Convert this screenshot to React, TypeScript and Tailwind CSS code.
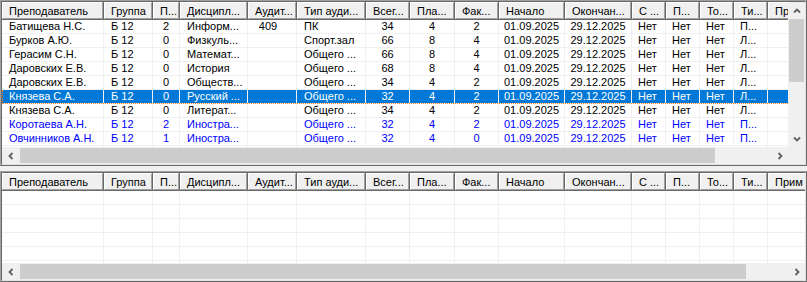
import React from 'react';

type Col = {title: string; w: string; cell: string};

const columns: Col[] = [
    {title: 'Преподаватель', w: 'w-[102px]', cell: 'justify-start pl-[7px]'},
    {title: 'Группа', w: 'w-[49px]', cell: 'justify-start pl-[7px]'},
    {title: 'П...', w: 'w-[27px]', cell: 'justify-center'},
    {title: 'Дисципл...', w: 'w-[68px]', cell: 'justify-start pl-[7px]'},
    {title: 'Аудит...', w: 'w-[49px]', cell: 'justify-center pr-2'},
    {title: 'Тип ауди...', w: 'w-[69px]', cell: 'justify-start pl-[7px]'},
    {title: 'Всег...', w: 'w-[44px]', cell: 'justify-center'},
    {title: 'Пла...', w: 'w-[45px]', cell: 'justify-center'},
    {title: 'Фак...', w: 'w-[44px]', cell: 'justify-center'},
    {title: 'Начало', w: 'w-[66px]', cell: 'justify-center'},
    {title: 'Окончан...', w: 'w-[67px]', cell: 'justify-center'},
    {title: 'С ...', w: 'w-[34px]', cell: 'justify-start pl-[6px]'},
    {title: 'П...', w: 'w-[34px]', cell: 'justify-start pl-[6px]'},
    {title: 'То...', w: 'w-[34px]', cell: 'justify-start pl-[6px]'},
    {title: 'Ти...', w: 'w-[34px]', cell: 'justify-start pl-[6px]'},
    {title: 'Прим', w: 'w-[64px]', cell: 'justify-start pl-[6px]'},
];

type Tone = 'normal' | 'blue' | 'selected';

const tail = ['01.09.2025', '29.12.2025', 'Нет', 'Нет', 'Нет'];

const rows: {cells: string[]; tone: Tone}[] = [
    {cells: ['Батищева Н.С.', 'Б 12', '2', 'Информ...', '409', 'ПК', '34', '4', '2', ...tail, 'П...'], tone: 'normal'},
    {cells: ['Бурков А.Ю.', 'Б 12', '0', 'Физкуль...', '', 'Спорт.зал', '66', '8', '4', ...tail, 'Л...'], tone: 'normal'},
    {cells: ['Герасим С.Н.', 'Б 12', '0', 'Математ...', '', 'Общего ...', '66', '8', '4', ...tail, 'Л...'], tone: 'normal'},
    {cells: ['Даровских Е.В.', 'Б 12', '0', 'История', '', 'Общего ...', '68', '8', '4', ...tail, 'Л...'], tone: 'normal'},
    {cells: ['Даровских Е.В.', 'Б 12', '0', 'Обществ...', '', 'Общего ...', '34', '4', '2', ...tail, 'Л...'], tone: 'normal'},
    {cells: ['Князева С.А.', 'Б 12', '0', 'Русский ...', '', 'Общего ...', '32', '4', '2', ...tail, 'Л...'], tone: 'selected'},
    {cells: ['Князева С.А.', 'Б 12', '0', 'Литерат...', '', 'Общего ...', '34', '4', '2', ...tail, 'Л...'], tone: 'normal'},
    {cells: ['Коротаева А.Н.', 'Б 12', '2', 'Иностра...', '', 'Общего ...', '32', '4', '2', ...tail, 'П...'], tone: 'blue'},
    {cells: ['Овчинников А.Н.', 'Б 12', '1', 'Иностра...', '', 'Общего ...', '32', '4', '0', ...tail, 'П...'], tone: 'blue'},
    {cells: [], tone: 'normal'},
];

const Chevron = ({dir}: {dir: 'up' | 'down' | 'left' | 'right'}) => {
    const pts = {
        up: '1,5.5 4,2.5 7,5.5',
        down: '1,2.5 4,5.5 7,2.5',
        left: '5.5,1 2.5,4 5.5,7',
        right: '2.5,1 5.5,4 2.5,7',
    }[dir];
    return (
        <svg width="8" height="8" viewBox="0 0 8 8">
            <polyline points={pts} fill="none" stroke="#606060" strokeWidth="1.8"/>
        </svg>
    );
};

const HeaderRow = () => (
    <div className="flex h-[18px] shrink-0">
        {columns.map((c, i) => (
            <div key={i} className={`${c.w} shrink-0 h-full border-r border-b border-[#696969]`}>
                <div className="h-full flex items-center pl-[6px] pt-px bg-[#f0f0f0] border border-t-white border-l-white border-r-[#a0a0a0] border-b-[#a0a0a0] whitespace-nowrap overflow-hidden text-black">
                    {c.title}
                </div>
            </div>
        ))}
    </div>
);

const DataRow = ({cells, tone}: {cells: string[]; tone: Tone}) => {
    const toneClass = tone === 'selected'
        ? 'bg-[#0078d7] text-white'
        : tone === 'blue' ? 'bg-white text-[#0000ff]' : 'bg-white text-black';
    return (
        <div className={`relative flex h-[14px] shrink-0 ${toneClass}`}>
            {columns.map((c, i) => (
                <div key={i}
                     className={`${c.w} ${c.cell} shrink-0 h-full flex items-center border-r border-b border-[#f0f0f0] whitespace-nowrap overflow-hidden`}>
                    {cells[i] ?? ''}
                </div>
            ))}
            {tone === 'selected' ?
                <div className="absolute inset-0 border-b border-l border-dotted border-[#ff8728]"/> : null}
        </div>
    );
};

const HScroll = ({thumb}: {thumb: string}) => (
    <div className="flex flex-1 h-[17px] bg-[#f0f0f0]">
        <div className="w-[17px] shrink-0 flex items-center justify-center"><Chevron dir="left"/></div>
        <div className="flex-1 flex items-center">
            <div className={`${thumb} ml-px h-[15px] bg-[#cdcdcd]`}/>
        </div>
        <div className="w-[17px] shrink-0 flex items-center justify-center"><Chevron dir="right"/></div>
    </div>
);

const VScroll = () => (
    <div className="w-[17px] shrink-0 flex flex-col bg-[#f0f0f0]">
        <div className="h-[17px] shrink-0 flex items-center justify-center"><Chevron dir="up"/></div>
        <div className="flex-1 flex flex-col items-center">
            <div className="w-[15px] h-[63px] bg-[#cdcdcd]"/>
        </div>
        <div className="h-[17px] shrink-0 flex items-center justify-center"><Chevron dir="down"/></div>
    </div>
);

const Frame = ({children, className}: {children: React.ReactNode; className: string}) => (
    <div className={`${className} min-h-0 flex flex-col border border-t-[#a0a0a0] border-l-[#a0a0a0] border-r-[#696969] border-b-[#696969]`}>
        <div className="flex-1 min-h-0 flex flex-col border border-t-[#696969] border-l-[#696969] border-r-[#e3e3e3] border-b-[#e3e3e3]">
            {children}
        </div>
    </div>
);

export default function App() {
    return (
        <div className="w-[807px] h-[282px] bg-[#f0f0f0] flex flex-col text-[11px] leading-none overflow-hidden"
             style={{fontFamily: '"Liberation Sans", Arial, sans-serif'}}>
            <Frame className="h-[166px] shrink-0">
                <div className="flex flex-1 min-h-0">
                    <div className="flex-1 min-w-0 flex flex-col overflow-hidden bg-white">
                        <HeaderRow/>
                        {rows.map((r, i) => <DataRow key={i} cells={r.cells} tone={r.tone}/>)}
                    </div>
                    <VScroll/>
                </div>
                <div className="flex h-[17px] shrink-0">
                    <HScroll thumb="w-[695px]"/>
                    <div className="w-[17px] shrink-0 bg-[#f0f0f0]"/>
                </div>
            </Frame>
            <Frame className="flex-1 mt-[5px]">
                <div className="flex-1 min-h-0 flex flex-col overflow-hidden bg-white">
                    <HeaderRow/>
                    {[0, 1, 2, 3, 4, 5].map(i => <DataRow key={i} cells={[]} tone="normal"/>)}
                </div>
                <div className="flex h-[17px] shrink-0">
                    <HScroll thumb="w-[726px]"/>
                </div>
            </Frame>
        </div>
    );
}
